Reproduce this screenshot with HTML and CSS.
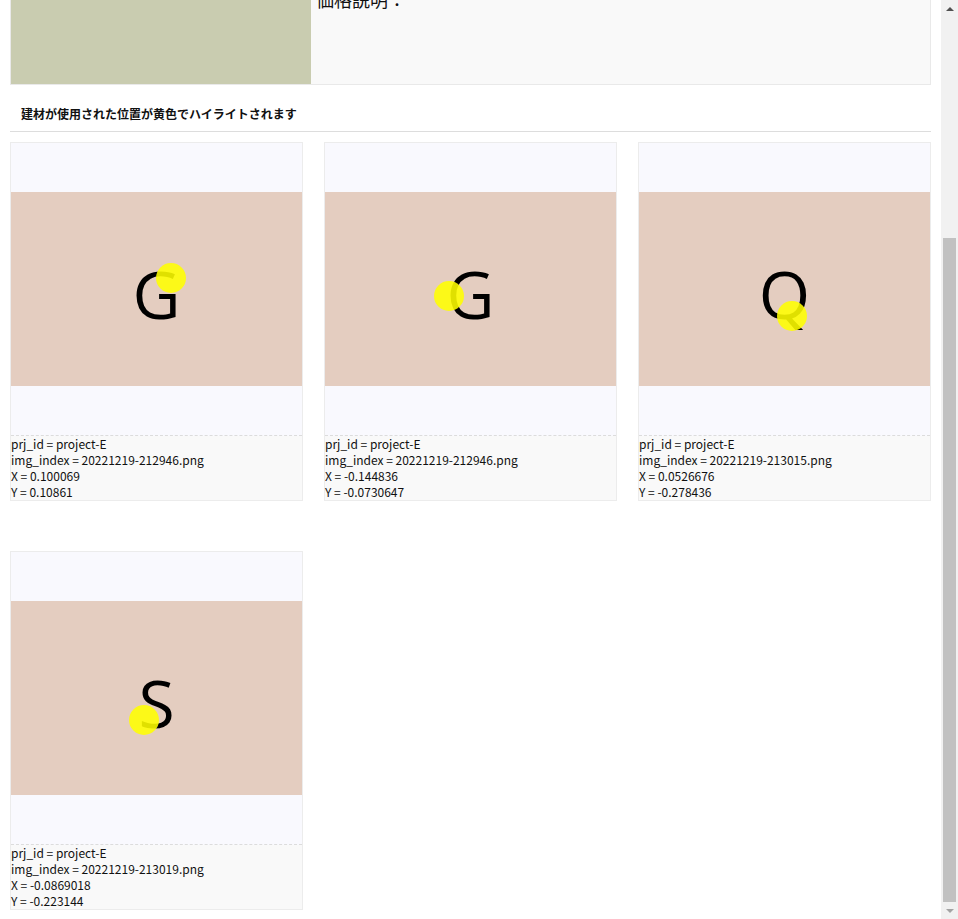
FILE: index.html
```html
<!DOCTYPE html>
<html lang="ja">
<head>
<meta charset="utf-8">
<title>建材</title>
<link rel="stylesheet" href="styles.css">
</head>
<body>
<div class="viewport">
  <main class="page">
    <section class="product">
      <div class="product-image"></div>
      <div class="product-info">
        <p class="price-label">価格説明：</p>
      </div>
    </section>

    <h2 class="section-title">建材が使用された位置が黄色でハイライトされます</h2>

    <div class="usage-grid">
      <article class="usage-card">
        <div class="shot">
          <div class="shot-image">
            <span class="shot-letter">G</span>
            <span class="marker" style="left: 55.0035%; top: 44.5695%;"></span>
          </div>
        </div>
        <div class="meta">
          <div>prj_id = project-E</div>
          <div>img_index = 20221219-212946.png</div>
          <div>X = 0.100069</div>
          <div>Y = 0.10861</div>
        </div>
      </article>

      <article class="usage-card">
        <div class="shot">
          <div class="shot-image">
            <span class="shot-letter">G</span>
            <span class="marker" style="left: 42.7582%; top: 53.6532%;"></span>
          </div>
        </div>
        <div class="meta">
          <div>prj_id = project-E</div>
          <div>img_index = 20221219-212946.png</div>
          <div>X = -0.144836</div>
          <div>Y = -0.0730647</div>
        </div>
      </article>

      <article class="usage-card">
        <div class="shot">
          <div class="shot-image">
            <span class="shot-letter">Q</span>
            <span class="marker" style="left: 52.6334%; top: 63.9218%;"></span>
          </div>
        </div>
        <div class="meta">
          <div>prj_id = project-E</div>
          <div>img_index = 20221219-213015.png</div>
          <div>X = 0.0526676</div>
          <div>Y = -0.278436</div>
        </div>
      </article>

      <article class="usage-card">
        <div class="shot">
          <div class="shot-image">
            <span class="shot-letter">S</span>
            <span class="marker" style="left: 45.6549%; top: 61.1572%;"></span>
          </div>
        </div>
        <div class="meta">
          <div>prj_id = project-E</div>
          <div>img_index = 20221219-213019.png</div>
          <div>X = -0.0869018</div>
          <div>Y = -0.223144</div>
        </div>
      </article>
    </div>
  </main>

  <div class="scrollbar" aria-hidden="true">
    <div class="scroll-btn up"><span class="arrow-up"></span></div>
    <div class="scroll-track"><div class="scroll-thumb"></div></div>
    <div class="scroll-btn down"><span class="arrow-down"></span></div>
  </div>
</div>
</body>
</html>
```

FILE: styles.css
```css
html, body {
  margin: 0;
  padding: 0;
  height: 100%;
  overflow: hidden;
  background: #ffffff;
}

body {
  font-family: "Noto Sans CJK JP", "Noto Sans", sans-serif;
  color: #111;
}

.viewport {
  display: flex;
  height: 919px;
}

.page {
  flex: 1;
  min-width: 0;
  padding: 0 10px;
  overflow: hidden;
}

/* product card (scrolled partly out of view) */
.product {
  display: flex;
  margin-top: -30px;
  height: 114px;
  border: 1px solid #e9e9e9;
  border-top: none;
  background: #f9f9f9;
}

.product-image {
  width: 300px;
  background: #c9ccb0;
}

.product-info {
  flex: 1;
  padding: 16px 5px 0 5px;
}

.price-label {
  margin: 0;
  font-size: 18px;
  line-height: 27px;
  color: #111;
}

.section-title {
  margin: 0;
  padding: 20px 11px 8px;
  font-size: 12px;
  line-height: 18px;
  font-weight: 700;
  color: #111;
  border-bottom: 1px solid #dddddd;
}

.usage-grid {
  display: grid;
  grid-template-columns: repeat(3, 293px);
  column-gap: 21px;
  row-gap: 50px;
  margin-top: 10px;
}

.usage-card {
  border: 1px solid #ececec;
  background: #f9f9f9;
}

.shot {
  height: 292px;
  background: #f9f9fe;
  border-bottom: 1px dashed #dcdcdc;
  display: flex;
  align-items: center;
}

.shot-image {
  position: relative;
  width: 100%;
  height: 194px;
  background: #e4cdc0;
  display: flex;
  align-items: center;
  justify-content: center;
}

.shot-letter {
  font-family: "Open Sans", "Noto Sans", sans-serif;
  font-size: 66px;
  line-height: 66px;
  padding-top: 8px;
  color: #000;
}

.marker {
  position: absolute;
  width: 30px;
  height: 30px;
  border-radius: 50%;
  background: rgba(255, 255, 0, 0.88);
  transform: translate(-50%, -50%);
}

.meta {
  font-size: 12px;
  line-height: 16px;
  color: #111;
}

/* fake scrollbar (scrolled to bottom) */
.scrollbar {
  width: 17px;
  background: #f1f1f1;
  display: flex;
  flex-direction: column;
}

.scroll-btn {
  height: 17px;
  display: flex;
  align-items: center;
  justify-content: center;
}

.arrow-up {
  width: 0;
  height: 0;
  border-left: 4px solid transparent;
  border-right: 4px solid transparent;
  border-bottom: 4px solid #505050;
}

.arrow-down {
  width: 0;
  height: 0;
  border-left: 4px solid transparent;
  border-right: 4px solid transparent;
  border-top: 4px solid #a3a3a3;
}

.scroll-track {
  flex: 1;
  padding: 221px 2px 0 2px;
}

.scroll-thumb {
  height: 664px;
  background: #c1c1c1;
}
```
